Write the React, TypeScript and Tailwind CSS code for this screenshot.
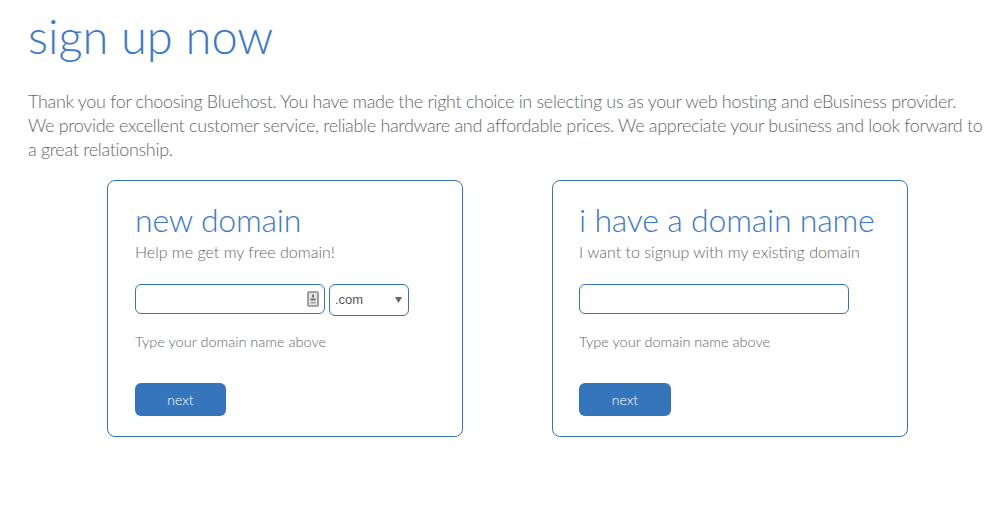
const DomainCard = ({ title, subtitle, existing }: { title: string; subtitle: string; existing?: boolean }) => (
  <div className="w-[356px] h-[257px] rounded-lg border border-[#3575bb] px-[27px] pt-[20px]">
    <h2 className={`text-[32px] leading-[38px] font-light tracking-[-0.2px] text-[#3a78d2] whitespace-nowrap ${existing ? "-ml-px" : ""}`}>{title}</h2>
    <p className={`mt-[1px] text-[16px] leading-[24px] font-light text-[#666666] ${existing ? "-ml-px" : ""}`}>{subtitle}</p>
    <div className={`mt-[20px] flex items-start gap-1 h-[32px] ${existing ? "-ml-px" : ""}`}>
      {existing ? (
        <input className="h-[30px] w-[270px] rounded-md border border-[#3575bb] bg-white" />
      ) : (
        <>
          <div className="relative h-[30px] w-[190px] rounded-md border border-[#3575bb] bg-white">
            <svg className="absolute right-[5px] top-[6px]" width="12" height="16" viewBox="0 0 12 16">
              <rect x="1" y="1" width="10" height="14" rx="1" fill="#e4e4e4" stroke="#8a8a8a" strokeWidth="1.6" />
              <rect x="5" y="3.5" width="2" height="3" fill="#707070" />
              <rect x="3.5" y="7.5" width="5" height="2" fill="#707070" />
              <rect x="3.5" y="11" width="5" height="1.5" fill="#a0a0a0" />
            </svg>
          </div>
          <div className="flex h-[32px] w-[80px] items-center justify-between rounded-md border border-[#3575bb] bg-white pl-[5px] pr-[6px] font-['Liberation_Sans',sans-serif] text-[13px] text-[#555555]">
            <span>.com</span>
            <svg width="7" height="6" viewBox="0 0 7 6">
              <path d="M0 0h7L3.5 6z" fill="#666666" />
            </svg>
          </div>
        </>
      )}
    </div>
    <p className={`mt-[16px] text-[14.5px] leading-[20px] font-light text-[#666666] ${existing ? "-ml-px" : ""}`}>Type your domain name above</p>
    <button className={`mt-[31px] block h-[33px] rounded-md bg-[#3575bb] text-[14px] font-light text-white ${existing ? "-ml-px w-[92px]" : "w-[91px]"}`}>next</button>
  </div>
);

export default function App() {
  return (
    <div className="min-h-[506px] bg-white font-['Lato',sans-serif]">
      <div className="pl-[28px] pt-[6px]">
        <h1 className="text-[47px] leading-[60px] font-light text-[#3a78d2]">sign up now</h1>
        <p className="mt-[23px] whitespace-nowrap text-[18px] leading-[24px] font-light tracking-[-0.32px] text-[#666666]">
          Thank you for choosing Bluehost. You have made the right choice in selecting us as your web hosting and eBusiness provider.
          <br />
          We provide excellent customer service, reliable hardware and affordable prices. We appreciate your business and look forward to
          <br />
          a great relationship.
        </p>
      </div>
      <div className="mt-[19px] flex gap-[89px] pl-[107px]">
        <DomainCard title="new domain" subtitle="Help me get my free domain!" />
        <DomainCard title="i have a domain name" subtitle="I want to signup with my existing domain" existing />
      </div>
    </div>
  );
}
